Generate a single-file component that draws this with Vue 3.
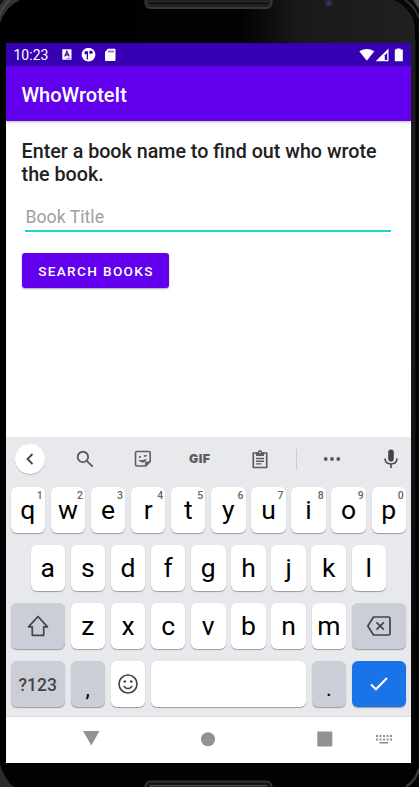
<script setup>
const topRow = 'qwertyuiop'.split('').map((c, i) => ({ c, n: (i + 1) % 10 }))
const midRow = 'asdfghjkl'.split('')
const lowRow = 'zxcvbnm'.split('')
</script>

<template>
  <div class="device">
    <svg class="frame" width="419" height="787" viewBox="0 0 419 787">
      <defs>
        <linearGradient id="topShade" x1="0" x2="1" y1="0" y2="0">
          <stop offset="0" stop-color="#000" />
          <stop offset=".58" stop-color="#020202" />
          <stop offset=".72" stop-color="#191919" />
          <stop offset="1" stop-color="#202020" />
        </linearGradient>
        <linearGradient id="sideShade" x1="0" x2="0" y1="0" y2="1">
          <stop offset="0" stop-color="#1f1f1f" />
          <stop offset=".45" stop-color="#181818" />
          <stop offset="1" stop-color="#040404" />
        </linearGradient>
      </defs>
      <rect width="419" height="787" fill="#000" />
      <path d="M0 0H395Q415 11 415 30V43H0Z" fill="url(#topShade)" />
      <rect x="411" y="40" width="4.500" height="723" fill="url(#sideShade)" />
      <path d="M0 763H411V775Q405 782 398 787H0Z" fill="#030303" />
      <path d="M0 0H20Q5 7 0 23Z" fill="#333" />
      <path d="M0 15Q3 5 10 0" fill="none" stroke="#484848" stroke-width="2" />
      <path d="M0 0H4L0 5Z" fill="#111" />
      <path d="M394 0H419V36Q417 11 394 0Z" fill="#080808" />
      <path d="M405 0Q415 7 419 18" fill="none" stroke="#303030" stroke-width="2" />
      <path d="M413 0H419V9Z" fill="#4a4e52" />
      <path d="M0 764Q4 779 14 787H0Z" fill="#2b2b2b" />
      <path d="M419 769Q416 780 406 787" fill="none" stroke="#383838" stroke-width="2.500" />
      <rect x="145.500" y="-12" width="126" height="20" rx="5" fill="#222" stroke="#383838" stroke-width="2" />
      <path d="M149 3.500H268" stroke="#090909" />
      <rect x="145.500" y="781.500" width="126" height="20" rx="5" fill="#151515" stroke="#343434" stroke-width="2" />
      <path d="M150 785.800H267" stroke="#484848" stroke-width="1.500" />
      <circle cx="329" cy="2.500" r="5" fill="#20232f" />
      <circle cx="329" cy="3" r="2.500" fill="#2d385c" />
    </svg>

    <main class="screen">
      <header class="status">
        <span class="clock">10:23</span>
        <svg class="status-left" width="56" height="14" viewBox="0 0 56 14">
          <rect x=".3" y="1.300" width="9.200" height="10.500" rx=".5" fill="#fff" />
          <path d="M2.700 8.500L4.900 3.200L7.100 8.500M3.500 6.800H6.300" fill="none" stroke="#3700b3" stroke-width="1.200" />
          <path d="M4.500 10.300H8.500" stroke="#3700b3" stroke-width=".6" />
          <circle cx="26.500" cy="6.700" r="6.900" fill="#fff" />
          <path d="M22.600 3.200H26V11.500H24.700V6.200H22.600Z" fill="#3700b3" />
          <path d="M27.400 2.700H29.400Q30.700 2.700 30.700 4.200Q30.700 5.800 29.400 5.800H27.400Z" fill="#3700b3" />
          <path d="M45.800 .8H52.500Q53.500 .8 53.500 1.800V12Q53.500 13 52.500 13H44Q43 13 43 12V4Z" fill="#fff" />
          <path d="M47 2.500V4.500M49 2.500V4.500M51 2.500V4.500" stroke="#3700b3" />
        </svg>
        <svg class="status-right" width="46" height="14" viewBox="0 0 46 14">
          <path d="M.3 3.200Q7.800 -1.300 15.300 3.200L7.800 12.800Z" fill="#fff" />
          <path d="M29.500 .5V13.300H16.700Z" fill="#fff" />
          <path d="M25.800 7.200L28.200 4.800V12H25.800Z" fill="#3700b3" />
          <path d="M37.500 .5H41.500V1.500H43.800V13.300H35.800V1.500H37.500Z" fill="#fff" />
        </svg>
      </header>
      <div class="appbar">WhoWroteIt</div>

      <section class="content">
        <h1>Enter a book name to find out who wrote<br>the book.</h1>
        <div class="field">Book Title</div>
        <button class="search"><span>SEARCH BOOKS</span></button>
      </section>

      <section class="keyboard">
        <div class="tools">
          <span class="back">
            <svg width="30" height="30" viewBox="0 0 30 30"><path d="M17.500 10L12.500 15L17.500 20" fill="none" stroke="#444" stroke-width="1.800" /></svg>
          </span>
          <svg class="t-search" width="18" height="18" viewBox="0 0 18 18" fill="none" stroke="#5c5d60" stroke-width="1.900"><circle cx="6.900" cy="6.900" r="5.200" /><path d="M10.800 10.800L16.700 16.700" /></svg>
          <svg class="t-sticker" width="18" height="18" viewBox="0 0 18 18">
            <path d="M3 1.500H14.700Q16.200 1.500 16.200 3V11.500L11.700 16H3Q1.500 16 1.500 14.500V3Q1.500 1.500 3 1.500Z" fill="none" stroke="#5c5d60" stroke-width="1.600" />
            <path d="M11 16V13Q11 11.500 12.500 11.500H16.500Z" fill="#5c5d60" />
            <path d="M4.700 9.800Q8.500 11 12.700 8.800Q12 12.500 9 12.500Q5.800 12.500 4.700 9.800Z" fill="#5c5d60" />
            <circle cx="6" cy="7" r="1.100" fill="#5c5d60" /><path d="M9.800 6.300L12.700 5.500" stroke="#5c5d60" stroke-width="1.700" />
          </svg>
          <span class="t-gif">GIF</span>
          <svg class="t-clip" width="16" height="19" viewBox="0 0 16 19">
            <path d="M1.300 3H14.700V17.500H1.300Z" fill="none" stroke="#5c5d60" stroke-width="1.700" stroke-linejoin="round" />
            <path d="M4 2H6Q6 .1 8 .1Q10 .1 10 2H12V6H4Z" fill="#5c5d60" />
            <circle cx="8" cy="2.600" r=".8" fill="#e8e9ed" />
            <path d="M4 8.500H12M4 11.200H12M4 13.900H9.500" stroke="#5c5d60" stroke-width="1.400" />
          </svg>
          <i class="divider"></i>
          <svg class="t-dots" width="18" height="6" viewBox="0 0 18 6" fill="#5c5d60"><circle cx="2.700" cy="3" r="2" /><circle cx="9" cy="3" r="2" /><circle cx="15.300" cy="3" r="2" /></svg>
          <svg class="t-mic" width="14" height="20" viewBox="0 0 14 20"><rect x="4.200" y=".5" width="5.600" height="12" rx="2.800" fill="#444" /><path d="M1 9.500Q1.300 15 7 15Q12.700 15 13 9.500M7 15V19" fill="none" stroke="#444" stroke-width="1.600" /></svg>
        </div>

        <div class="row">
          <span v-for="k in topRow" :key="k.c" class="key">{{ k.c }}<sup>{{ k.n }}</sup></span>
        </div>
        <div class="row middle">
          <span v-for="c in midRow" :key="c" class="key">{{ c }}</span>
        </div>
        <div class="row">
          <span class="key grey wide">
            <svg width="24" height="24" viewBox="0 0 24 24"><path d="M12 2.500L21.500 12.800H17.700V21.300H6.300V12.800H2.500Z" fill="none" stroke="#444" stroke-width="1.700" stroke-linejoin="round" /></svg>
          </span>
          <span v-for="c in lowRow" :key="c" class="key">{{ c }}</span>
          <span class="key grey wide">
            <svg width="26" height="22" viewBox="0 0 26 22" fill="none" stroke="#444" stroke-width="1.700" stroke-linejoin="round"><path d="M7.500 2H22.500Q24 2 24 3.500V18.500Q24 20 22.500 20H7.500L1.800 11Z" /><path d="M10.500 7.300L17.900 14.700M17.900 7.300L10.500 14.700" /></svg>
          </span>
        </div>
        <div class="row">
          <span class="key grey wide symbols">?123</span>
          <span class="key grey low">,</span>
          <span class="key">
            <svg width="22" height="22" viewBox="0 0 22 22"><circle cx="11" cy="11" r="9" fill="none" stroke="#444" stroke-width="1.700" /><circle cx="7.800" cy="8.500" r="1.300" fill="#444" /><circle cx="14.200" cy="8.500" r="1.300" fill="#444" /><path d="M6.800 12.800Q8.300 15.500 11 15.500Q13.700 15.500 15.200 12.800" fill="none" stroke="#444" stroke-width="1.500" /></svg>
          </span>
          <span class="key space"></span>
          <span class="key grey low">.</span>
          <span class="key enter wide">
            <svg width="20" height="16" viewBox="0 0 20 16"><path d="M2 8.500L7 13.300L18 2" fill="none" stroke="#fff" stroke-width="2" /></svg>
          </span>
        </div>
      </section>

      <nav class="navbar">
        <svg width="405" height="46" viewBox="0 0 405 46" fill="#929292">
          <path d="M77 14H93.500L85.300 28.500Z" />
          <circle cx="202" cy="22.200" r="7" />
          <rect x="311.300" y="14.500" width="15" height="15" rx="1" />
          <path d="M370 19H386M370 22.500H386" stroke="#929292" stroke-width="2" stroke-dasharray="2 1.500" />
          <rect x="373.500" y="25" width="8.500" height="1.600" />
        </svg>
      </nav>
    </main>
  </div>
</template>

<style>
body { margin: 0; background: #000; overflow: hidden; }
</style>

<style scoped>
.device { box-sizing: border-box; width: 419px; height: 787px; padding: 43px 8px 24px 6px; position: relative; overflow: hidden; font-family: Roboto, sans-serif; }
.frame { position: absolute; left: 0; top: 0; }
.screen { position: relative; width: 405px; height: 720px; display: flex; flex-direction: column; background: #fff; }
.status { height: 23px; background: #3700b3; display: flex; align-items: center; color: #fff; }
.clock { width: 48px; margin-left: 7.500px; font-size: 14px; line-height: 23px; padding-top: 2px; box-sizing: border-box; }
.status-left { margin-top: 1px; }
.status-right { margin-left: auto; margin-right: 6.500px; }
.appbar { height: 55px; flex: none; box-sizing: border-box; background: #6200ee; color: #fff; font-size: 20px; font-weight: 500; line-height: 58px; padding-left: 15.500px; box-shadow: 0 1px 3px #0004; }
.content { height: 316px; flex: none; box-sizing: border-box; padding: 19px 15.600px 0; display: flex; flex-direction: column; align-items: flex-start; }
h1 { margin: 0; font-size: 19.700px; font-weight: 500; line-height: 23px; color: #212121; white-space: nowrap; }
.field { box-sizing: border-box; width: 365.500px; height: 31px; margin: 15px 0 0 3.900px; border-bottom: 2px solid #18d9c7; font-size: 17.700px; line-height: 32px; color: #a0a0a0; }
.search { width: 147.800px; height: 35px; margin-top: 21px; padding: 1px 0 0 1px; border: 0; border-radius: 3px; background: #6200ee; color: #fff; font: 500 13.600px/34px Roboto, sans-serif; letter-spacing: 1.350px; box-shadow: 0 1px 2px #0005; }
.keyboard { height: 280px; flex: none; box-sizing: border-box; padding: 0 5px 0 4.600px; background: #e8e9ed; display: flex; flex-direction: column; gap: 12px; border-bottom: 1px solid #dddddf; }
.tools { height: 50px; margin-bottom: -12px; padding-top: 6px; box-sizing: border-box; display: flex; flex: none; align-items: center; }
.back { width: 30px; height: 30px; border-radius: 50%; background: #fff; box-shadow: 0 1px 1px #0003; margin-left: 4.800px; margin-top: -12px; }
.tools > svg, .tools > i, .t-gif { margin-top: -12px; flex: none; }
.tools .t-search { margin-left: 30.300px; }
.tools .t-sticker { margin-left: 40.300px; }
.t-gif { width: 26px; margin-left: 37px; font: 900 12.300px/16px Inter, sans-serif; color: #5c5d60; letter-spacing: .5px; }
.tools .t-clip { margin-left: 37px; }
.divider { width: 1px; height: 21px; background: #cbccd0; margin-left: 28px; }
.tools .t-dots { margin-left: 26.500px; }
.tools .t-mic { margin-left: 42.500px; }
.row { display: flex; gap: 5.700px; height: 46px; flex: none; }
.row.middle { padding: 0 20px; }
.key { position: relative; flex: 1 1 0; min-width: 0; height: 46px; border-radius: 6px; background: #fff; box-shadow: 0 1px 1px #0005; display: flex; align-items: center; justify-content: center; font-size: 26.500px; line-height: 44px; color: #000; }
.key sup { position: absolute; top: 2px; right: 2.200px; font-size: 10.500px; line-height: 13px; font-weight: 500; color: #666; }
.wide { flex: 0 0 54.300px; }
.grey { background: #cbced6; }
.space { flex: 0 0 155.200px; }
.enter { background: #1a73e8; }
.symbols { font-size: 17.500px; font-weight: 500; color: #444; padding-top: 1px; box-sizing: border-box; }
.low { padding-top: 9px; box-sizing: border-box; font-size: 22px; }
.navbar { height: 46px; background: #fff; }
.navbar svg { display: block; }
</style>
